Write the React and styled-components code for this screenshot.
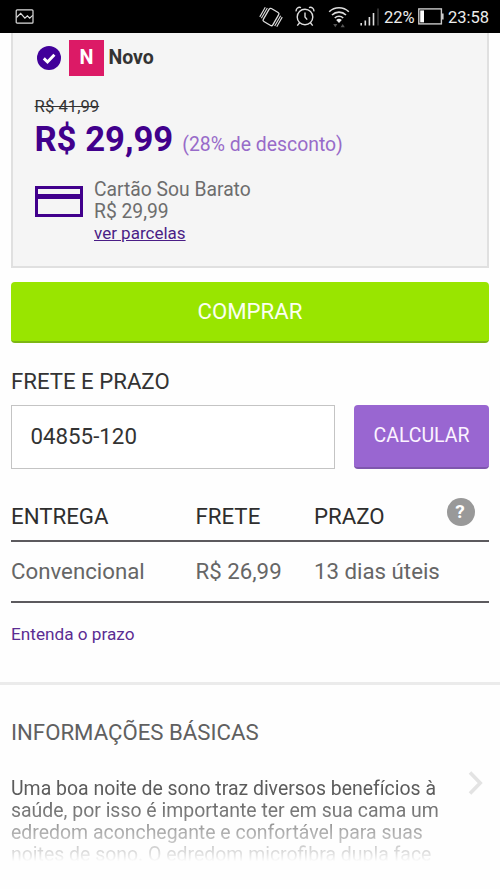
import React from "react";
import styled, { createGlobalStyle } from "styled-components";

const Global = createGlobalStyle`
  *, *::before, *::after { box-sizing: border-box; }
  body { margin: 0; background: #fefefe; font-family: Roboto, "Liberation Sans", sans-serif; color: #333; }
  p, h2 { margin: 0; font-weight: 400; }
  svg { display: block; flex: none; }
`;

const Screen = styled.div`
  width: 500px;
  height: 889px;
  overflow: hidden;
  display: flex;
  flex-direction: column;
`;

const StatusBar = styled.header`
  flex: none;
  height: 33px;
  background: #000;
  display: flex;
  align-items: center;
  padding: 0 11px 0 15px;
`;

const StatusIcons = styled.div`
  display: flex;
  align-items: center;
  margin-left: auto;
`;

const IconSlot = styled.span`
  display: block;
  margin-right: ${(p) => p.$gap}px;
`;

const StatusText = styled.span`
  color: #ececec;
  font-size: 16.5px;
  line-height: 20px;
  padding-top: 2px;
  white-space: nowrap;
  width: ${(p) => p.$width}px;
`;

const Offer = styled.section`
  flex: none;
  height: 235px;
  margin: 0 11px;
  padding: 7px 21px 0;
  background: #f5f5f5;
  border: solid #e0e0e0;
  border-width: 0 2px 2px;
`;

const Condition = styled.div`
  display: flex;
  align-items: center;
  height: 36px;
  padding-left: 3px;
`;

const Badge = styled.span`
  width: 35px;
  height: 36px;
  margin: 0 4.5px 0 8px;
  background: #dc1a66;
  color: #fff;
  font-size: 19.8px;
  font-weight: 700;
  line-height: 36px;
  text-align: center;
`;

const ConditionName = styled.span`
  font-size: 19.5px;
  font-weight: 700;
  line-height: 22px;
  padding-bottom: 1px;
`;

const OldPrice = styled.p`
  margin: 21px 0 0 0.6px;
  font-size: 16.7px;
  line-height: 20px;
  text-decoration: line-through;
`;

const PriceLine = styled.p`
  display: flex;
  align-items: baseline;
  height: 40px;
  margin: 2px 0 0 0.4px;
  gap: 9px;
  line-height: 40px;
`;

const Price = styled.strong`
  font-size: 34.7px;
  font-weight: 700;
  color: #41008c;
`;

const Discount = styled.span`
  font-size: 19.4px;
  color: #986bc9;
`;

const Installments = styled.div`
  display: flex;
  gap: 11px;
  margin: 19px 0 0 1px;
`;

const CardIcon = styled.div`
  flex: none;
  width: 48px;
  height: 31px;
  margin-top: 8px;
  border: 3px solid #41008c;
  padding-top: 5px;

  &::before {
    content: "";
    display: block;
    height: 5px;
    background: #41008c;
  }
`;

const InstallmentText = styled.div`
  padding-top: 1px;
  font-size: 19.3px;
  line-height: 22.2px;
  color: #6d6d6d;
`;

const InstallmentLink = styled.a`
  display: block;
  font-size: 17px;
  line-height: 21.4px;
  color: #4a1d86;
  text-decoration: underline;
`;

const Action = styled.button`
  flex: none;
  width: ${(p) => (p.$secondary ? "135px" : "auto")};
  height: ${(p) => (p.$secondary ? 64 : 61)}px;
  margin: ${(p) => (p.$secondary ? "0" : "14px 11px 0")};
  padding: 0 0 1px;
  border: 0;
  border-bottom: 2px solid ${(p) => (p.$secondary ? "#7f56ae" : "#7db713")};
  border-radius: 4px;
  background: ${(p) => (p.$secondary ? "#9966d1" : "#99e500")};
  color: ${(p) => (p.$secondary ? "#fbf3ff" : "#fbfff0")};
  font: 400 ${(p) => (p.$secondary ? 19.5 : 22.2)}px Roboto, "Liberation Sans", sans-serif;
`;

const Shipping = styled.section`
  flex: none;
  padding: 26px 11px 0;
  height: 339px;
`;

const Title = styled.h2`
  font-size: 22.2px;
  line-height: 24px;
  color: ${(p) => (p.$muted ? "#606060" : "#333")};
`;

const ZipForm = styled.div`
  display: flex;
  justify-content: space-between;
  margin-top: 12px;
`;

const ZipInput = styled.input`
  width: 324px;
  height: 64px;
  border: 1px solid #c4c4c4;
  outline: 0;
  background: #fff;
  padding: 0 18px 2px 18.5px;
  font: 400 22.3px Roboto, "Liberation Sans", sans-serif;
  color: #333;
`;

const Row = styled.div`
  display: grid;
  grid-template-columns: 184.5px 118.5px 1fr auto;
  align-items: center;
  height: ${(p) => (p.$head ? 73 : 61)}px;
  padding: ${(p) => (p.$head ? "22px 0 0" : "0 0 1px")};
  border-bottom: 2px solid #5c5a5e;
  font-size: 22.25px;
  line-height: 24px;
  color: ${(p) => (p.$head ? "#2e2e2e" : "#666")};
  white-space: nowrap;
`;

const Help = styled.span`
  width: 28px;
  height: 28px;
  margin: 0 14px 7px 0;
  padding-right: 2px;
  border-radius: 50%;
  background: #999;
  color: #fff;
  font-size: 19px;
  font-weight: 700;
  line-height: 28px;
  text-align: center;
`;

const TermLink = styled.a`
  display: block;
  margin-top: 21px;
  font-size: 17.2px;
  line-height: 21px;
  color: #5b2d93;
`;

const Info = styled.section`
  flex: 1;
  border-top: 3px solid #ebebeb;
  padding: 35px 16px 0 11px;
`;

const InfoBody = styled.div`
  display: flex;
  justify-content: space-between;
  margin-top: 27px;
`;

const Description = styled.p`
  margin-top: 7px;
  height: 89px;
  white-space: pre;
  font-size: 19.45px;
  line-height: 22.15px;
  color: #5c5c5c;
  mask-image: linear-gradient(to bottom, #000 20%, rgba(0, 0, 0, 0.78) 43%, rgba(0, 0, 0, 0.42) 66%, rgba(0, 0, 0, 0.2) 84%, transparent 94%);
`;

const ConditionCheck = () => (
  <svg width="24" height="24" viewBox="0 0 24 24">
    <circle cx="12" cy="12" r="12" fill="#41009a" />
    <path d="M6.8 12.4l3.7 3.6 6.9-7.3" fill="none" stroke="#fff" strokeWidth="2.9" />
  </svg>
);

const Picture = () => (
  <svg width="19" height="15" viewBox="0 0 19 15" fill="none" stroke="#ddd" strokeWidth="1.2">
    <rect x="1.2" y=".8" width="16.8" height="13.4" rx="1" />
    <path d="M1.5 8.5l4.2-4.1 4.2 4.8 2.5-2.3 2.3 2.3 3-2.8" />
  </svg>
);

const Vibrate = () => (
  <svg width="24" height="22" viewBox="0 0 24 22" fill="none" stroke="#ddd" strokeWidth="1.3">
    <g transform="rotate(30 12 11)">
      <rect x="6.5" y="3.5" width="11" height="15" rx="1.6" />
      <path d="M4.3 5v12M2.2 5.5v11M19.7 5v12M21.8 5.5v11" strokeWidth="1.1" />
    </g>
  </svg>
);

const Alarm = () => (
  <svg width="20" height="21" viewBox="0 0 20 21" fill="none" stroke="#ddd" strokeWidth="1.4">
    <circle cx="10" cy="11" r="7.8" />
    <path d="M10 6.5V11l2.2 2.6M1.2 5.3A3.4 3.4 0 0 1 6 1.6M18.8 5.3A3.4 3.4 0 0 0 14 1.6M4.6 16.8l-2.3 2.8M15.4 16.8l2.3 2.8" />
  </svg>
);

const Wifi = () => (
  <svg width="22" height="22" viewBox="0 0 22 22" fill="none" stroke="#ddd" strokeWidth="1.6">
    <path d="M1.2 5.8a14 14 0 0 1 19.6 0M4 9a10 10 0 0 1 14 0M6.8 12a6 6 0 0 1 8.4 0" />
    <path d="M8.2 14a4.2 4.2 0 0 1 5.6 0l-2.8 3z" fill="#eee" stroke="none" />
    <path d="M5.2 18h4.2l-2.1 3.2zM12.6 21.2h4.2l-2.1-3.2z" fill="#555" stroke="none" />
  </svg>
);

const Signal = () => (
  <svg width="20" height="18" viewBox="0 0 20 18" strokeWidth="1.6">
    <path d="M1.2 15v2.5M5.3 12.5v5M9.4 9v8.5M13.5 5v12.5" stroke="#ddd" />
    <path d="M18 .5v17" stroke="#3a3a3a" />
  </svg>
);

const Battery = () => (
  <svg width="26" height="17" viewBox="0 0 26 17">
    <rect x=".8" y=".9" width="22.6" height="15" fill="none" stroke="#c9c9c9" strokeWidth="1.4" />
    <path d="M2.2 2.4h3.8v12H2.2z" fill="#fff" />
    <path d="M24 5.5h1.6v6H24z" fill="#ccc" />
  </svg>
);

const Chevron = () => (
  <svg width="18" height="24" viewBox="0 0 18 24" fill="none" stroke="#e3e3e3" strokeWidth="3.6">
    <path d="M4 1.5l10.2 10.5L4 22.5" />
  </svg>
);

const description = [
  "Uma boa noite de sono traz diversos benefícios à",
  "saúde, por isso é importante ter em sua cama um",
  "edredom aconchegante e confortável para suas",
  "noites de sono. O edredom microfibra dupla face",
].join("\n");

export default function App() {
  return (
    <Screen>
      <Global />
      <StatusBar>
        <Picture />
        <StatusIcons>
          <IconSlot $gap={12}><Vibrate /></IconSlot>
          <IconSlot $gap={13}><Alarm /></IconSlot>
          <IconSlot $gap={10}><Wifi /></IconSlot>
          <IconSlot $gap={4}><Signal /></IconSlot>
          <StatusText $width={34}>22%</StatusText>
          <IconSlot $gap={4}><Battery /></IconSlot>
          <StatusText $width={41}>23:58</StatusText>
        </StatusIcons>
      </StatusBar>

      <Offer>
        <Condition>
          <ConditionCheck />
          <Badge>N</Badge>
          <ConditionName>Novo</ConditionName>
        </Condition>
        <OldPrice>R$ 41,99</OldPrice>
        <PriceLine>
          <Price>R$ 29,99</Price>
          <Discount>(28% de desconto)</Discount>
        </PriceLine>
        <Installments>
          <CardIcon />
          <InstallmentText>
            <p>Cartão Sou Barato</p>
            <p>R$ 29,99</p>
            <InstallmentLink>ver parcelas</InstallmentLink>
          </InstallmentText>
        </Installments>
      </Offer>

      <Action>COMPRAR</Action>

      <Shipping>
        <Title>FRETE E PRAZO</Title>
        <ZipForm>
          <ZipInput defaultValue="04855-120" />
          <Action $secondary>CALCULAR</Action>
        </ZipForm>
        <Row $head>
          <span>ENTREGA</span>
          <span>FRETE</span>
          <span>PRAZO</span>
          <Help>?</Help>
        </Row>
        <Row>
          <span>Convencional</span>
          <span>R$ 26,99</span>
          <span>13 dias úteis</span>
        </Row>
        <TermLink>Entenda o prazo</TermLink>
      </Shipping>

      <Info>
        <Title $muted>INFORMAÇÕES BÁSICAS</Title>
        <InfoBody>
          <Description>{description}</Description>
          <Chevron />
        </InfoBody>
      </Info>
    </Screen>
  );
}
